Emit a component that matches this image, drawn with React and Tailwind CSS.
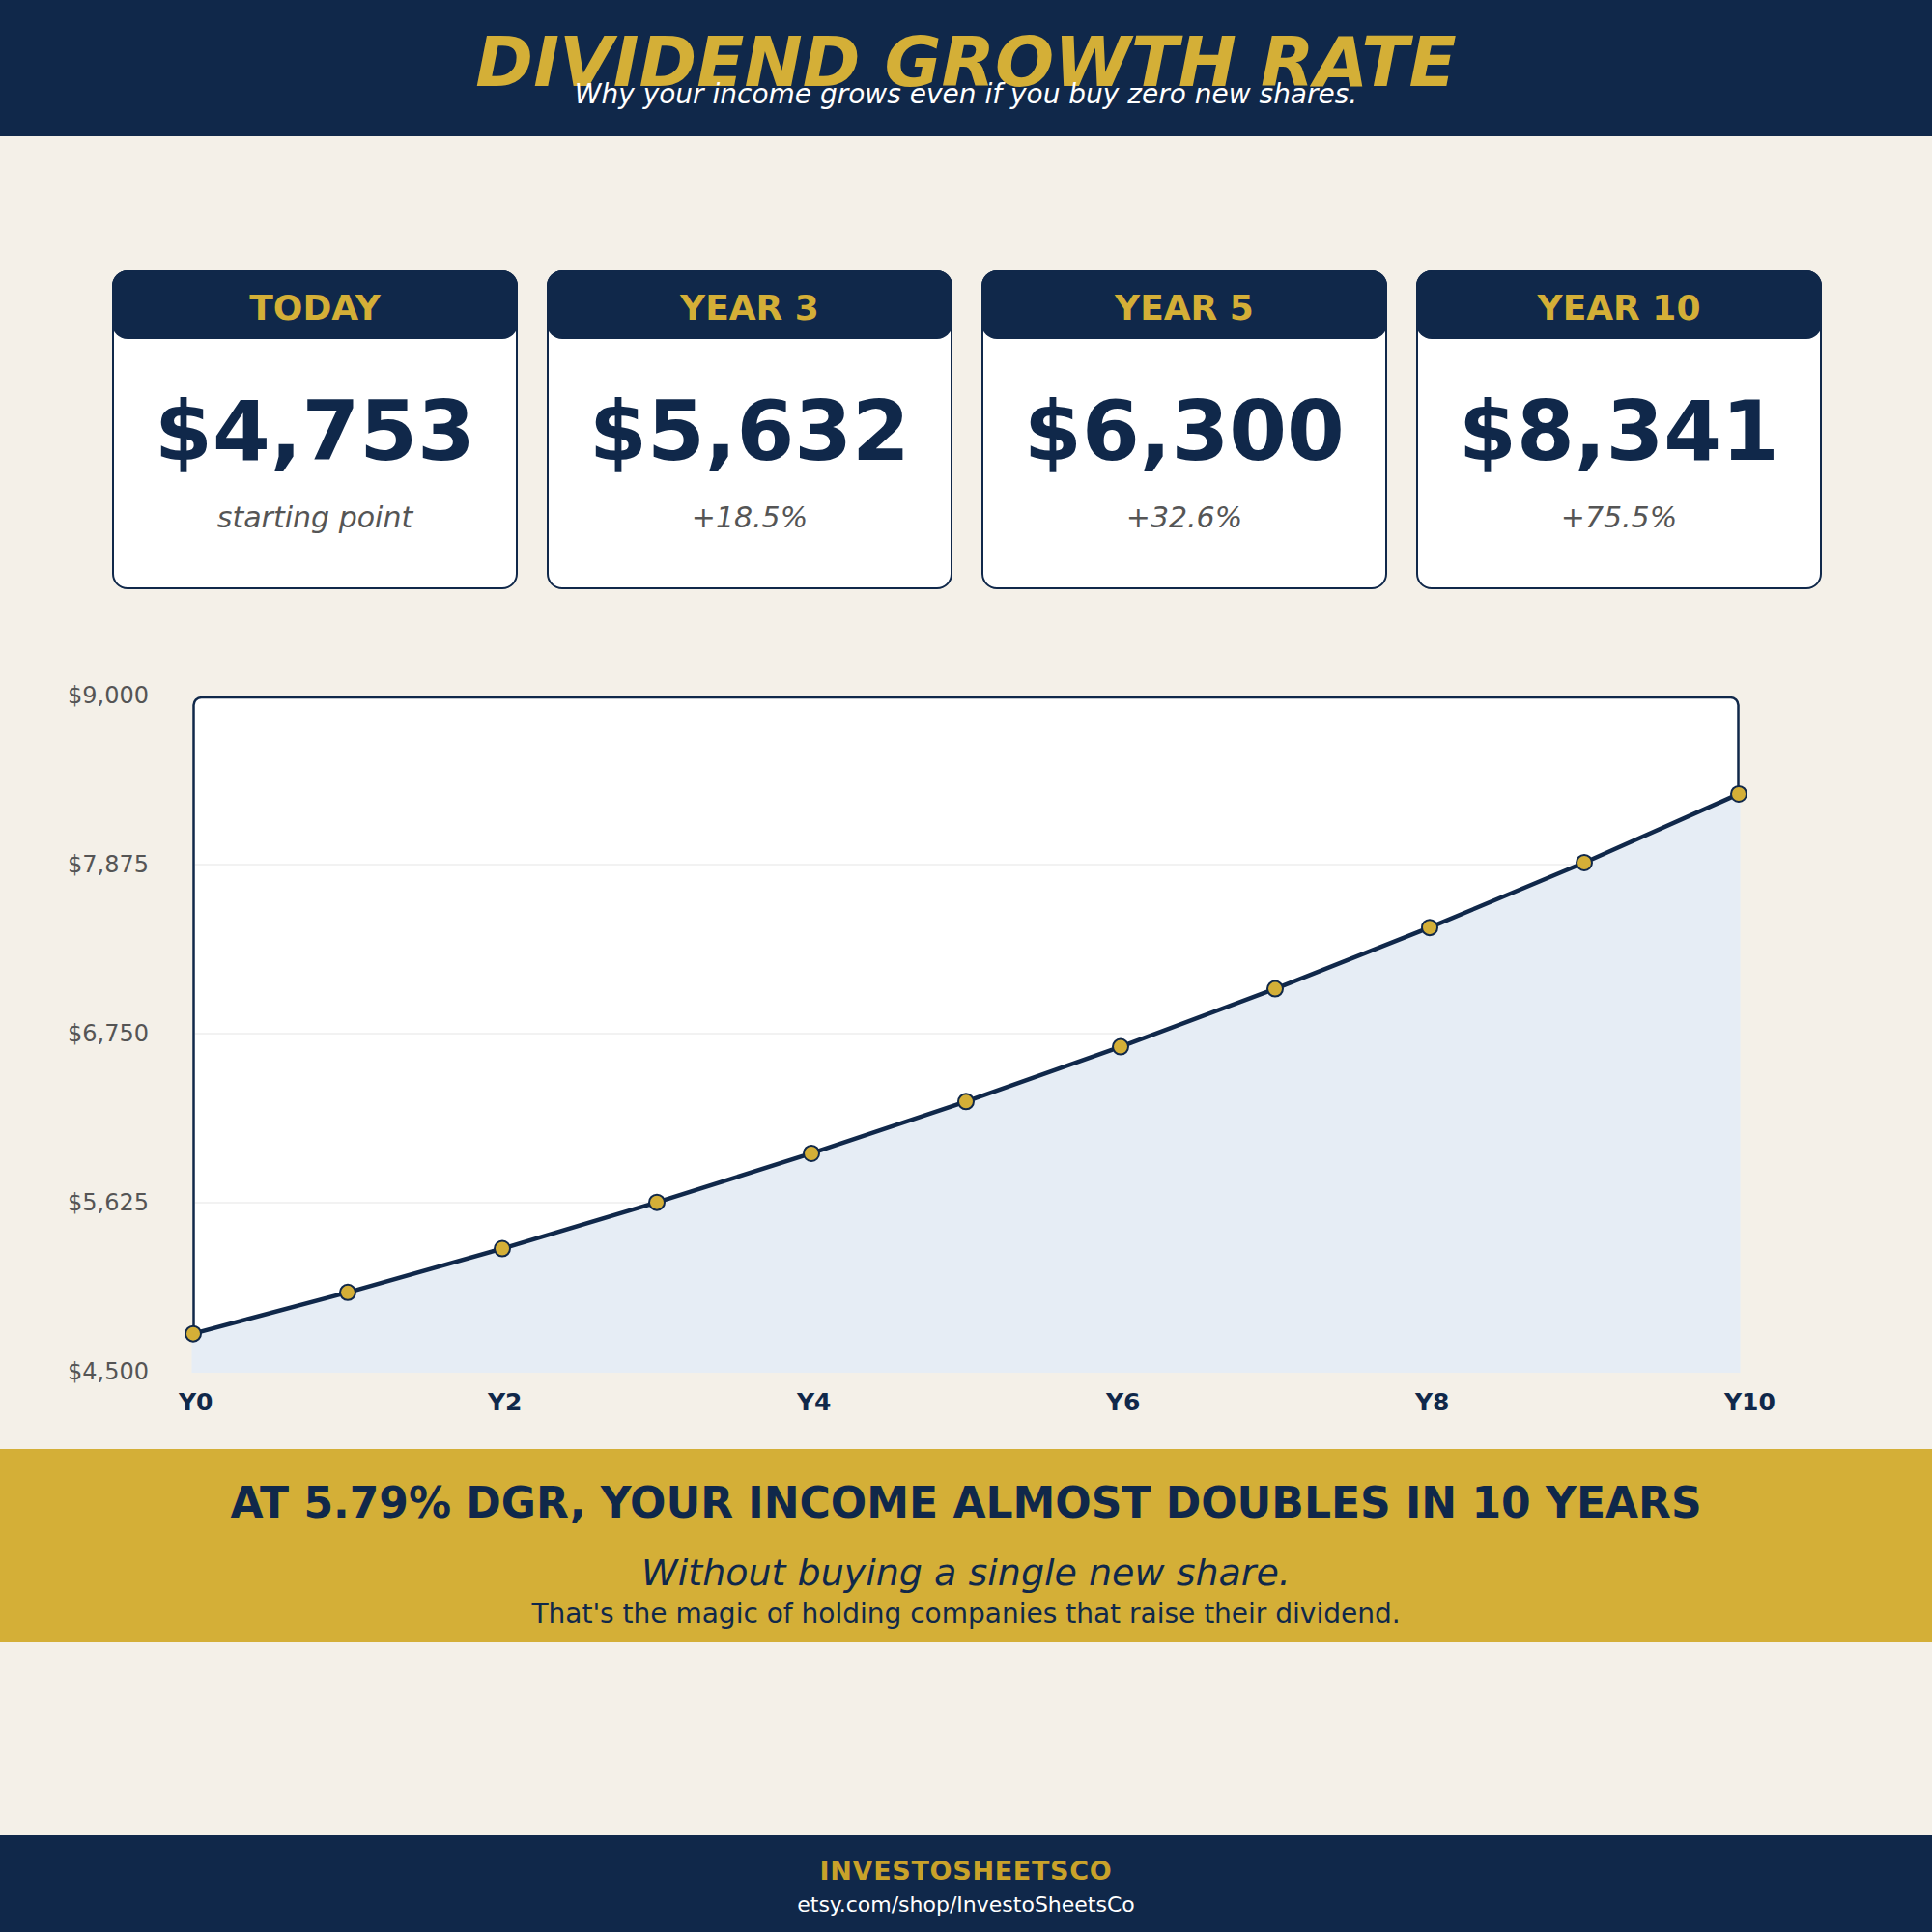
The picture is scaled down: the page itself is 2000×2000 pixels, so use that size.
import React from "react";

const NAVY = "#10284a";
const GOLD = "#d4af37";

const cards = [
  { label: "TODAY", value: "$4,753", sub: "starting point" },
  { label: "YEAR 3", value: "$5,632", sub: "+18.5%" },
  { label: "YEAR 5", value: "$6,300", sub: "+32.6%" },
  { label: "YEAR 10", value: "$8,341", sub: "+75.5%" },
];

function Card({ label, value, sub }) {
  return (
    <div className="w-[420px] h-[330px] rounded-[16px] border-[2.5px] border-[#10284a] bg-white flex flex-col items-center">
      <div className="-mx-[2.5px] -mt-[2.5px] w-[420px] h-[71px] shrink-0 rounded-[16px] bg-[#10284a] flex items-center justify-center pt-[7px]">
        <span className="text-[36px] font-bold text-[#d4af37] leading-[1.164]">{label}</span>
      </div>
      <div className="mt-[52px] text-[86px] leading-none font-bold text-[#10284a]">{value}</div>
      <div className="mt-[32px] text-[30px] leading-none italic text-[#555555]">{sub}</div>
    </div>
  );
}

function Chart() {
  const off = 690;
  const xs = Array.from({ length: 11 }, (_, i) => 200 + i * 160);
  const vals = Array.from({ length: 11 }, (_, i) => 4753 * Math.pow(1.0579, i));
  const yOf = (v) => 1420 - ((v - 4500) / 4500) * 700 - off;
  const pts = xs.map((x, i) => [x, yOf(vals[i])]);
  const line = pts.map((p) => p.join(",")).join(" ");
  const area = `198.5,${1421 - off} 198.5,${pts[0][1]} ${line} 1801.5,${pts[10][1]} 1801.5,${1421 - off}`;
  const grid = [
    { v: 9000, label: "$9,000" },
    { v: 7875, label: "$7,875" },
    { v: 6750, label: "$6,750" },
    { v: 5625, label: "$5,625" },
    { v: 4500, label: "$4,500" },
  ];
  return (
    <svg width="2000" height="810" viewBox="0 0 2000 810" className="block">
      <rect x="200.5" y={722 - off} width="1599" height="696" rx="8" fill="#ffffff" stroke={NAVY} strokeWidth="2.5" />
      {[7875, 6750, 5625].map((v) => (
        <line key={v} x1="202" x2="1798" y1={yOf(v)} y2={yOf(v)} stroke="#eeeeee" strokeWidth="1.5" />
      ))}
      <polygon points={area} fill="#e6edf5" />
      <polyline points={line} fill="none" stroke={NAVY} strokeWidth="4.5" strokeLinejoin="round" />
      {pts.map(([x, y], i) => (
        <circle key={i} cx={x} cy={y} r="8" fill={GOLD} stroke={NAVY} strokeWidth="2" />
      ))}
      {grid.map((g) => (
        <text key={g.v} x="70" y={yOf(g.v) + 8} fontSize="24" fill="#555555" fontFamily="DejaVu Sans, sans-serif">
          {g.label}
        </text>
      ))}
      {[0, 2, 4, 6, 8, 10].map((i) => (
        <text key={i} x={xs[i] - 15} y={1460 - off} fontSize="25" fontWeight="bold" fill={NAVY} fontFamily="DejaVu Sans, sans-serif">
          {"Y" + i}
        </text>
      ))}
    </svg>
  );
}

export default function App() {
  return (
    <div className="w-[2000px] h-[2000px] bg-[#f4f0e8] flex flex-col font-['DejaVu_Sans',sans-serif]">
      <header className="h-[141px] shrink-0 bg-[#10284a] flex flex-col items-center">
        <h1 className="mt-[28px] text-[72px] leading-none font-bold italic text-[#d4af37]">DIVIDEND GROWTH RATE</h1>
        <p className="-mt-[16px] text-[28px] leading-none italic text-white">Why your income grows even if you buy zero new shares.</p>
      </header>

      <div className="mt-[139px] pl-[116px] flex gap-[30px]">
        {cards.map((c) => (
          <Card key={c.label} {...c} />
        ))}
      </div>

      <div className="mt-[80px]">
        <Chart />
      </div>

      <section className="h-[200px] shrink-0 bg-[#d4af37] flex flex-col items-center text-[#10284a]">
        <h2 className="mt-[34px] text-[44px] leading-none font-bold">AT 5.79% DGR, YOUR INCOME ALMOST DOUBLES IN 10 YEARS</h2>
        <p className="mt-[31px] text-[38px] leading-none italic">Without buying a single new share.</p>
        <p className="mt-[10px] text-[28px] leading-none">That's the magic of holding companies that raise their dividend.</p>
      </section>

      <div className="h-[200px] shrink-0" />

      <footer className="h-[100px] shrink-0 bg-[#10284a] flex flex-col items-center">
        <div className="mt-[23px] text-[27px] leading-none font-bold tracking-[0.7px] text-[#c9a22a]">INVESTOSHEETSCO</div>
        <div className="mt-[11px] text-[22px] leading-none text-white">etsy.com/shop/InvestoSheetsCo</div>
      </footer>
    </div>
  );
}
